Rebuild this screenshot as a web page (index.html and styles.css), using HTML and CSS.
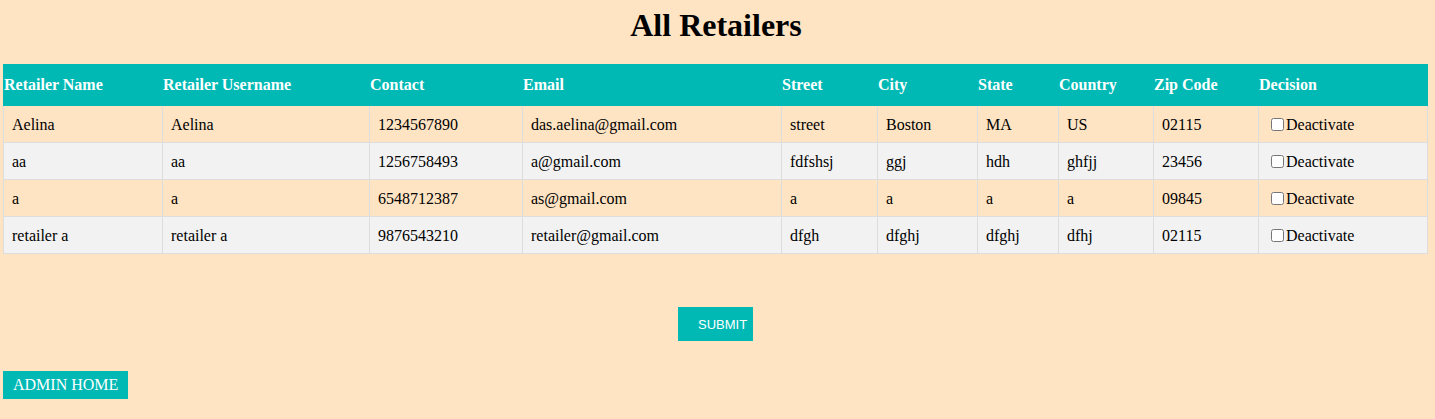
FILE: index.html
```html
<!DOCTYPE html>
<html>
<head>
<meta charset="utf-8">
<link rel="stylesheet" href="styles.css">
</head>
<body>
<h1 class="title">All Retailers</h1>
<table class="grid">
  <colgroup>
    <col class="c1"><col class="c2"><col class="c3"><col class="c4"><col class="c5">
    <col class="c6"><col class="c7"><col class="c8"><col class="c9"><col class="c10">
  </colgroup>
  <thead>
    <tr>
      <th>Retailer Name</th><th>Retailer Username</th><th>Contact</th><th>Email</th><th>Street</th>
      <th>City</th><th>State</th><th>Country</th><th>Zip Code</th><th>Decision</th>
    </tr>
  </thead>
  <tbody>
    <tr>
      <td>Aelina</td><td>Aelina</td><td>1234567890</td><td>das.aelina@gmail.com</td><td>street</td>
      <td>Boston</td><td>MA</td><td>US</td><td>02115</td>
      <td><label class="chk"><input type="checkbox">Deactivate</label></td>
    </tr>
    <tr>
      <td>aa</td><td>aa</td><td>1256758493</td><td>a@gmail.com</td><td>fdfshsj</td>
      <td>ggj</td><td>hdh</td><td>ghfjj</td><td>23456</td>
      <td><label class="chk"><input type="checkbox">Deactivate</label></td>
    </tr>
    <tr>
      <td>a</td><td>a</td><td>6548712387</td><td>as@gmail.com</td><td>a</td>
      <td>a</td><td>a</td><td>a</td><td>09845</td>
      <td><label class="chk"><input type="checkbox">Deactivate</label></td>
    </tr>
    <tr>
      <td>retailer a</td><td>retailer a</td><td>9876543210</td><td>retailer@gmail.com</td><td>dfgh</td>
      <td>dfghj</td><td>dfghj</td><td>dfhj</td><td>02115</td>
      <td><label class="chk"><input type="checkbox">Deactivate</label></td>
    </tr>
  </tbody>
</table>
<div class="actions">
  <button class="submit" type="button">SUBMIT</button>
</div>
<div class="home">
  <a class="homebtn" href="#">ADMIN HOME</a>
</div>
</body>
</html>
```

FILE: styles.css
```css
html, body {
  margin: 0;
  padding: 0;
  background: #ffe4c4;
  font-family: "Liberation Serif", "Times New Roman", serif;
  color: #000;
}
body {
  padding: 7px 0 0 0;
}
.title {
  margin: 0 0 20px 0;
  padding-right: 3px;
  text-align: center;
  font-size: 32px;
  line-height: 37px;
  font-weight: bold;
}
.grid {
  margin-left: 3px;
  width: 1424px;
  border-collapse: collapse;
  table-layout: fixed;
  font-size: 16px;
}
.c1 { width: 159px; }
.c2 { width: 207px; }
.c3 { width: 153px; }
.c4 { width: 259px; }
.c5 { width: 96px; }
.c6 { width: 100px; }
.c7 { width: 81px; }
.c8 { width: 95px; }
.c9 { width: 105px; }
.c10 { width: 169px; }
.grid th {
  background: #00b9b5;
  color: #fff;
  text-align: left;
  font-weight: bold;
  padding: 12px 0;
  line-height: 16px;
  border: 1px solid #00b9b5;
}
.grid tbody tr {
  height: 37px;
}
.grid td {
  border: 1px solid #ddd;
  padding: 8px 8px;
  line-height: 19px;
}
.grid tbody tr:nth-child(even) td {
  background: #f2f2f2;
}
.chk {
  display: inline-flex;
  align-items: center;
  position: relative;
  top: 1px;
  height: 18px;
}
.chk input {
  margin: 0 2px 0 4px;
  width: 13px;
  height: 13px;
}
.actions {
  display: flex;
  justify-content: center;
  padding-top: 53px;
}
.submit {
  background: #00b9b5;
  color: #fff;
  border: none;
  font-family: "Liberation Sans", Arial, sans-serif;
  font-size: 13px;
  height: 34px;
  width: 75px;
  padding: 0 6px 0 20px;
  margin-left: -4px;
  cursor: pointer;
}
.home {
  display: flex;
  padding: 30px 0 0 3px;
}
.homebtn {
  display: inline-block;
  background: #00b9b5;
  color: #fff;
  text-decoration: none;
  font-size: 16px;
  line-height: 28px;
  height: 28px;
  padding: 0 10px 0 10px;
}
```
